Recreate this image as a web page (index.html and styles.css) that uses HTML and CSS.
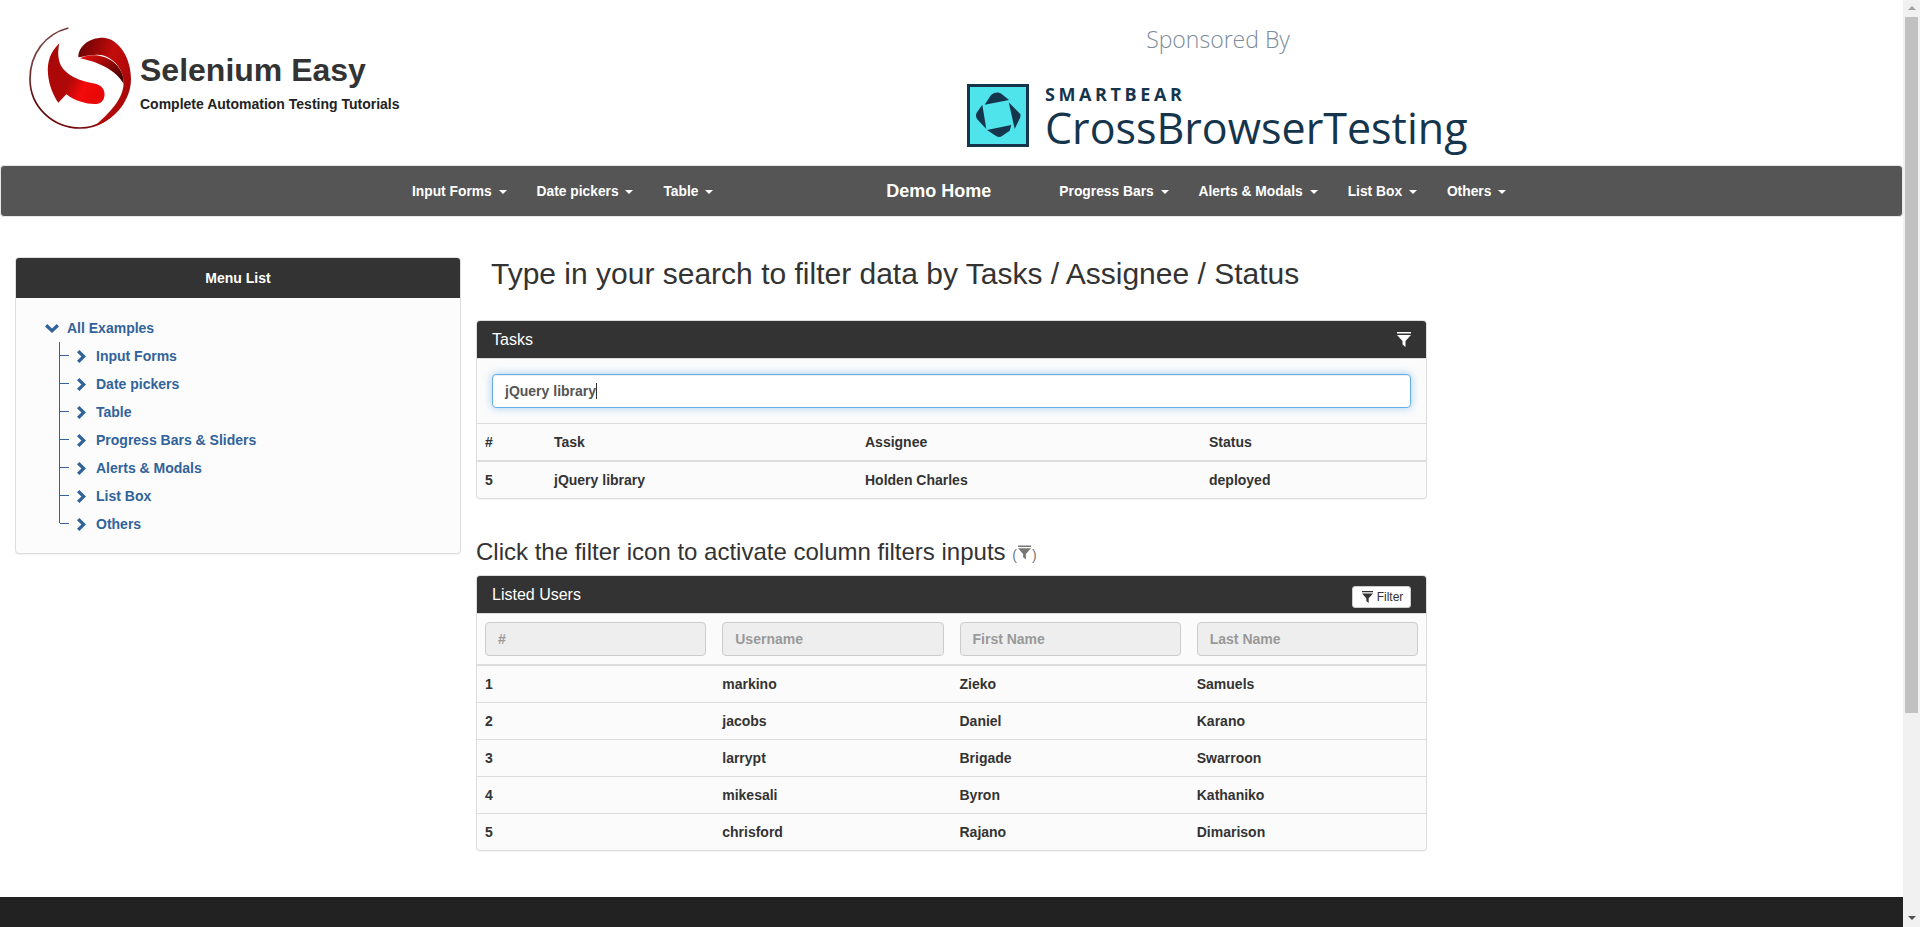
FILE: index.html
```html
<!DOCTYPE html>
<html lang="en">
<head>
  <meta charset="UTF-8">
  <title>Selenium Easy - Table Filter</title>
  <link rel="stylesheet" href="styles.css">
</head>
<body>

<div class="page">

  <header class="top">
    <div class="brand">
      <svg class="brand-logo" viewBox="0 0 330 330" width="110" height="110">
        <defs>
          <linearGradient id="ringGrad" x1="0" y1="0" x2="1" y2="1">
            <stop offset="0" stop-color="#8a6a6a"/>
            <stop offset="0.4" stop-color="#5a0505"/>
            <stop offset="1" stop-color="#8b0a0a"/>
          </linearGradient>
          <linearGradient id="topGrad" x1="0" y1="0" x2="1" y2="0.6">
            <stop offset="0" stop-color="#5e0202"/>
            <stop offset="0.55" stop-color="#c40c0c"/>
            <stop offset="1" stop-color="#a50808"/>
          </linearGradient>
          <linearGradient id="midGrad" x1="0" y1="0" x2="1" y2="0.7">
            <stop offset="0" stop-color="#f01010"/>
            <stop offset="0.6" stop-color="#8e0505"/>
            <stop offset="1" stop-color="#4a0202"/>
          </linearGradient>
          <linearGradient id="leftGrad" x1="0" y1="0" x2="1" y2="0.5">
            <stop offset="0" stop-color="#a80808"/>
            <stop offset="0.55" stop-color="#b00808"/>
            <stop offset="0.8" stop-color="#f50a0a"/>
            <stop offset="1" stop-color="#e80808"/>
          </linearGradient>
        </defs>
        <path d="M130 12C60 30 15 90 15 165C15 250 85 312 165 312C215 312 265 285 295 230" fill="none" stroke="url(#ringGrad)" stroke-width="5"/>
        <path d="M160 100C160 65 195 40 235 41C285 45 318 105 318 165C318 225 275 285 210 306C255 265 296 225 296 175C296 130 255 90 215 92C195 93 175 97 160 100Z" fill="url(#topGrad)"/>
        <path d="M165 103C195 88 240 90 272 120C290 138 297 160 296 180C280 150 240 118 165 103Z" fill="url(#midGrad)"/>
        <path d="M103 58C75 85 66 115 69 150C72 185 85 215 100 236L124 211C150 232 190 242 215 240C233 238 241 222 238 204C234 188 222 180 200 177C165 170 125 155 108 125C98 105 98 80 103 58Z" fill="url(#leftGrad)"/>
      </svg>
      <div class="brand-text">
        <div class="brand-name">Selenium Easy</div>
        <div class="brand-sub">Complete Automation Testing Tutorials</div>
      </div>
    </div>
    <div class="sponsor">
      <div class="sponsor-label">Sponsored By</div>
      <div class="sponsor-logo">
        <svg class="cbt-icon" viewBox="0 0 62 63" width="62" height="63">
          <rect x="1.5" y="1.5" width="59" height="60" fill="#4fe3ec" stroke="#15354d" stroke-width="3"/>
          <path d="M17.7 20.7L24 11Q29 7 34 9.5L42 16Z" fill="#15354d"/>
          <path d="M41.7 18.3L53.3 30Q54 33 52 36L47.7 45Z" fill="#15354d"/>
          <path d="M20 46L44.3 41L42.7 46.7L35 52Q32.7 54 29 52Z" fill="#15354d"/>
          <path d="M15.3 20.7L19.3 45L10 35Q8 32 9.5 29Z" fill="#15354d"/>
        </svg>
        <div class="cbt-text">
          <div class="cbt-small">SMARTBEAR</div>
          <div class="cbt-big">CrossBrowserTesting</div>
        </div>
      </div>
    </div>
  </header>

  <nav class="navbar">
    <div class="nav-left">
      <a class="nav-link">Input Forms <span class="caret"></span></a>
      <a class="nav-link">Date pickers <span class="caret"></span></a>
      <a class="nav-link">Table <span class="caret"></span></a>
    </div>
    <a class="nav-home">Demo Home</a>
    <div class="nav-right">
      <a class="nav-link">Progress Bars <span class="caret"></span></a>
      <a class="nav-link">Alerts &amp; Modals <span class="caret"></span></a>
      <a class="nav-link">List Box <span class="caret"></span></a>
      <a class="nav-link">Others <span class="caret"></span></a>
    </div>
  </nav>

  <div class="content">

    <aside class="side-panel">
      <div class="side-heading">Menu List</div>
      <div class="side-body">
        <div class="tree-root">
          <svg class="chev-down" viewBox="0 0 14 9" width="14" height="9"><path d="M0 2.4L2.3 0L7 4.4L11.7 0L14 2.4L7 9Z"/></svg>
          <a>All Examples</a>
        </div>
        <ul class="tree">
          <li><svg class="chev-right" viewBox="0 0 9 13" width="9" height="13"><path d="M2.4 0L9 6.5L2.4 13L0 10.7L4.4 6.5L0 2.3Z"/></svg><a>Input Forms</a></li>
          <li><svg class="chev-right" viewBox="0 0 9 13" width="9" height="13"><path d="M2.4 0L9 6.5L2.4 13L0 10.7L4.4 6.5L0 2.3Z"/></svg><a>Date pickers</a></li>
          <li><svg class="chev-right" viewBox="0 0 9 13" width="9" height="13"><path d="M2.4 0L9 6.5L2.4 13L0 10.7L4.4 6.5L0 2.3Z"/></svg><a>Table</a></li>
          <li><svg class="chev-right" viewBox="0 0 9 13" width="9" height="13"><path d="M2.4 0L9 6.5L2.4 13L0 10.7L4.4 6.5L0 2.3Z"/></svg><a>Progress Bars &amp; Sliders</a></li>
          <li><svg class="chev-right" viewBox="0 0 9 13" width="9" height="13"><path d="M2.4 0L9 6.5L2.4 13L0 10.7L4.4 6.5L0 2.3Z"/></svg><a>Alerts &amp; Modals</a></li>
          <li><svg class="chev-right" viewBox="0 0 9 13" width="9" height="13"><path d="M2.4 0L9 6.5L2.4 13L0 10.7L4.4 6.5L0 2.3Z"/></svg><a>List Box</a></li>
          <li><svg class="chev-right" viewBox="0 0 9 13" width="9" height="13"><path d="M2.4 0L9 6.5L2.4 13L0 10.7L4.4 6.5L0 2.3Z"/></svg><a>Others</a></li>
        </ul>
      </div>
    </aside>

    <main class="main">
      <h2 class="title">Type in your search to filter data by Tasks / Assignee / Status</h2>

      <section class="panel">
        <div class="panel-heading">
          <span>Tasks</span>
          <svg class="filter-white" viewBox="0 0 14 15" width="14" height="15"><path d="M0 0H14V1.5H0ZM0 3H14L8.5 9V15L5.5 12.5V9Z"/></svg>
        </div>
        <div class="panel-search">
          <div class="search-box">jQuery library<span class="text-cursor"></span></div>
        </div>
        <table class="grid">
          <colgroup>
            <col class="col-num"><col class="col-task"><col class="col-assignee"><col class="col-status">
          </colgroup>
          <thead>
            <tr><th>#</th><th>Task</th><th>Assignee</th><th>Status</th></tr>
          </thead>
          <tbody>
            <tr><td>5</td><td>jQuery library</td><td>Holden Charles</td><td>deployed</td></tr>
          </tbody>
        </table>
      </section>

      <h3 class="subtitle">Click the filter icon to activate column filters inputs <span class="hint">(<svg class="filter-grey" viewBox="0 0 14 15" width="13" height="15"><path d="M0 0H14V1.5H0ZM0 3H14L8.5 9V15L5.5 12.5V9Z"/></svg>)</span></h3>

      <section class="panel">
        <div class="panel-heading">
          <span>Listed Users</span>
          <button class="btn-filter"><svg viewBox="0 0 14 15" width="11" height="12"><path d="M0 0H14V1.5H0ZM0 3H14L8.5 9V15L5.5 12.5V9Z"/></svg> Filter</button>
        </div>
        <table class="grid users">
          <thead>
            <tr class="filters">
              <th><div class="filter-input">#</div></th>
              <th><div class="filter-input">Username</div></th>
              <th><div class="filter-input">First Name</div></th>
              <th><div class="filter-input">Last Name</div></th>
            </tr>
          </thead>
          <tbody>
            <tr><td>1</td><td>markino</td><td>Zieko</td><td>Samuels</td></tr>
            <tr><td>2</td><td>jacobs</td><td>Daniel</td><td>Karano</td></tr>
            <tr><td>3</td><td>larrypt</td><td>Brigade</td><td>Swarroon</td></tr>
            <tr><td>4</td><td>mikesali</td><td>Byron</td><td>Kathaniko</td></tr>
            <tr><td>5</td><td>chrisford</td><td>Rajano</td><td>Dimarison</td></tr>
          </tbody>
        </table>
      </section>
    </main>

  </div>

  <footer class="footer"></footer>
</div>

<div class="scrollbar">
  <div class="scroll-arrow up"></div>
  <div class="scroll-thumb"></div>
  <div class="scroll-arrow down"></div>
</div>

</body>
</html>
```

FILE: styles.css
```css
* { box-sizing: border-box; }
html, body { height: 100%; }
body { margin: 0; display: flex; height: 927px; overflow: hidden; background: #fff; color: #333; font-family: "Liberation Sans", Arial, sans-serif; font-size: 14px; font-weight: bold; line-height: 20px; }

.page { flex: 1; min-width: 0; display: flex; flex-direction: column; }

/* top */
.top { height: 165px; display: flex; flex-shrink: 0; }
.brand { width: 967px; display: flex; padding: 24px 0 0 25px; }
.brand-logo { flex-shrink: 0; }
.brand-text { margin: 28px 0 0 5px; }
.brand-name { font-size: 32px; line-height: 36px; color: #333; white-space: nowrap; }
.brand-sub { margin-top: 8px; font-size: 14px; line-height: 16px; color: #222; white-space: nowrap; }
.sponsor { width: 502px; }
.sponsor-label { margin-top: 23px; text-align: center; font-family: "Open Sans", sans-serif; font-weight: 300; font-size: 23px; line-height: 32px; color: #7d8c9b; }
.sponsor-logo { margin-top: 29px; display: flex; }
.cbt-icon { flex-shrink: 0; }
.cbt-text { margin: 1px 0 0 16px; color: #15354d; }
.cbt-small { font-family: "Open Sans", sans-serif; font-size: 18px; line-height: 18px; font-weight: bold; letter-spacing: 3.6px; margin-bottom: 2px; }
.cbt-big { font-family: "Open Sans", sans-serif; font-weight: normal; font-size: 43px; line-height: 46px; }

/* nav */
.navbar { height: 52px; flex-shrink: 0; display: flex; align-items: center; background: #555; border: 1px solid #e7e7e7; border-radius: 4px; color: #fff; padding-left: 411px; font-size: 13.8px; }
.nav-left, .nav-right { display: flex; gap: 30px; padding-top: 2px; }
.nav-home { margin-left: 173px; font-size: 18px; }
.nav-right { margin-left: 68px; }
.caret { display: inline-block; width: 0; height: 0; margin-left: 3px; vertical-align: middle; border-top: 4px solid #fff; border-left: 4px solid transparent; border-right: 4px solid transparent; }

/* layout */
.content { display: flex; align-items: flex-start; gap: 15px; padding: 40px 0 0 15px; }

/* sidebar */
.side-panel { width: 446px; flex-shrink: 0; background: #fcfcfc; border: 1px solid #ddd; border-radius: 4px; box-shadow: 0 1px 1px rgba(0,0,0,.05); }
.side-heading { height: 40px; line-height: 40px; text-align: center; background: #333; color: #fff; border-radius: 3px 3px 0 0; }
.side-body { padding: 20px 0 30px 29px; color: #31639a; }
.tree-root { height: 20px; display: flex; align-items: center; }
.chev-down { fill: #31639a; margin-right: 8px; }
.tree { list-style: none; margin: 4px 0 0 14px; padding: 0; border-left: 1px solid #31639a; height: 181px; }
.tree li { height: 28px; display: flex; align-items: center; position: relative; padding-left: 17px; }
.tree li::before { content: ""; position: absolute; left: 0; top: 13px; width: 9px; border-top: 1px solid #31639a; }
.chev-right { fill: #31639a; margin-right: 10px; flex-shrink: 0; }

/* main */
.main { width: 951px; flex-shrink: 0; }
.title { margin: 0 0 0 15px; font-size: 30px; font-weight: normal; line-height: 33px; height: 63px; color: #333; }
.subtitle { margin: 0; height: 76px; padding-top: 40px; font-size: 24px; font-weight: normal; line-height: 26px; color: #333; }
.hint { font-size: 14px; color: #777; }
.filter-grey { fill: #777; vertical-align: 0; margin: 0 1px; }

.panel { border: 1px solid #ddd; border-radius: 4px; background: #fbfbfb; box-shadow: 0 1px 1px rgba(0,0,0,.05); }
.panel-heading { height: 38px; padding: 0 15px; display: flex; align-items: center; justify-content: space-between; background: #333; color: #fff; border-bottom: 1px solid #ddd; font-size: 16px; font-weight: normal; border-radius: 3px 3px 0 0; }
.filter-white { fill: #fff; }
.btn-filter { height: 22px; width: 59px; margin-top: 4px; padding: 0 0 0 2px; display: flex; align-items: center; justify-content: center; gap: 4px; background: #fff; border: 1px solid #ccc; border-radius: 3px; font-family: inherit; font-size: 12px; font-weight: normal; color: #333; }
.btn-filter svg { fill: #333; }

.panel-search { height: 65px; padding: 15px 15px 16px; border-bottom: 1px solid #ddd; }
.search-box { height: 34px; padding: 6px 12px; background: #fff; border: 1px solid #66afe9; border-radius: 4px; box-shadow: inset 0 1px 1px rgba(0,0,0,.075), 0 0 8px rgba(102,175,233,.6); color: #555; }
.text-cursor { display: inline-block; width: 1px; height: 16px; vertical-align: -3px; background: #333; }

.grid { width: 100%; border-collapse: collapse; table-layout: fixed; }
.grid th, .grid td { padding: 8px; text-align: left; vertical-align: top; }
.grid td { border-top: 1px solid #ddd; }
.grid thead th { border-bottom: 2px solid #ddd; }
.grid tbody tr:first-child td { border-top: 0; }
.col-num { width: 69px; }
.col-task { width: 311px; }
.col-assignee { width: 344px; }
.col-status { width: 225px; }

.filter-input { height: 34px; padding: 6px 12px; background: #eee; border: 1px solid #ccc; border-radius: 4px; color: #999; }

/* footer */
.footer { margin-top: 46px; flex: 1; background: #222; }

/* scrollbar */
.scrollbar { width: 17px; flex-shrink: 0; display: flex; flex-direction: column; background: #f1f1f1; }
.scroll-thumb { height: 696px; margin: 0 2px; background: #c1c1c1; }
.scroll-arrow { height: 17px; flex-shrink: 0; position: relative; }
.scroll-arrow::after { content: ""; position: absolute; left: 5px; border-left: 4px solid transparent; border-right: 4px solid transparent; }
.scroll-arrow.up::after { top: 6px; border-bottom: 4px solid #a3a3a3; }
.scroll-arrow.down { margin-top: auto; }
.scroll-arrow.down::after { top: 6px; border-top: 4px solid #505050; }
```
